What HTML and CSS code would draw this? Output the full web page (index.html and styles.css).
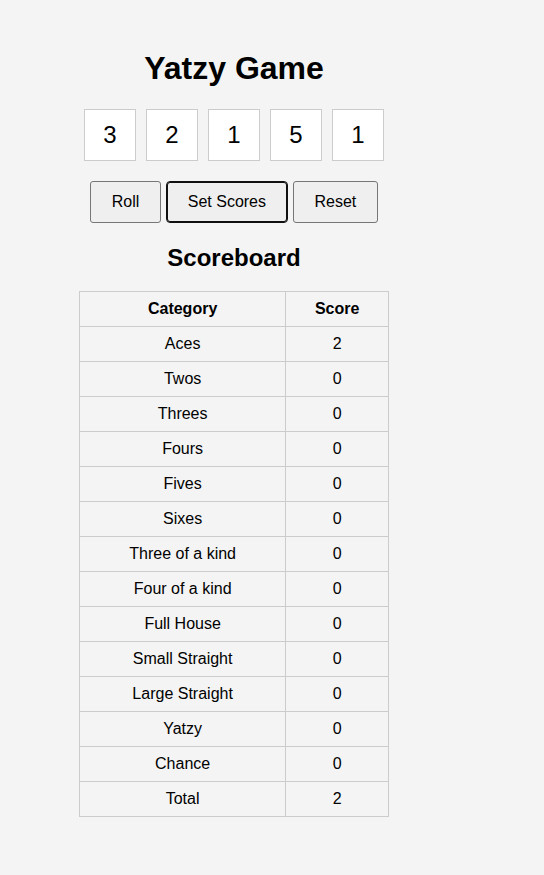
FILE: index.html
```html
<!DOCTYPE html>
<html lang="en">
<head>
<meta charset="utf-8">
<title>Yatzy Game</title>
<link rel="stylesheet" href="styles.css">
</head>
<body>
<div class="game">
  <h1 class="title">Yatzy Game</h1>
  <div class="dice">
    <div class="die">3</div>
    <div class="die">2</div>
    <div class="die">1</div>
    <div class="die">5</div>
    <div class="die">1</div>
  </div>
  <div class="controls">
    <button class="btn">Roll</button>
    <button class="btn btn-focus">Set Scores</button>
    <button class="btn">Reset</button>
  </div>
  <h2 class="subtitle">Scoreboard</h2>
  <table class="scoreboard">
    <colgroup><col class="col-cat"><col class="col-score"></colgroup>
    <thead>
      <tr><th>Category</th><th>Score</th></tr>
    </thead>
    <tbody>
      <tr><td>Aces</td><td>2</td></tr>
      <tr><td>Twos</td><td>0</td></tr>
      <tr><td>Threes</td><td>0</td></tr>
      <tr><td>Fours</td><td>0</td></tr>
      <tr><td>Fives</td><td>0</td></tr>
      <tr><td>Sixes</td><td>0</td></tr>
      <tr><td>Three of a kind</td><td>0</td></tr>
      <tr><td>Four of a kind</td><td>0</td></tr>
      <tr><td>Full House</td><td>0</td></tr>
      <tr><td>Small Straight</td><td>0</td></tr>
      <tr><td>Large Straight</td><td>0</td></tr>
      <tr><td>Yatzy</td><td>0</td></tr>
      <tr><td>Chance</td><td>0</td></tr>
      <tr><td>Total</td><td>2</td></tr>
    </tbody>
  </table>
</div>
</body>
</html>
```

FILE: styles.css
```css
html, body {
  margin: 0;
  padding: 0;
  background: #f4f4f4;
}

body {
  font-family: "Liberation Sans", Arial, sans-serif;
  font-size: 16px;
  color: #000;
}

.game {
  width: 452px;
  margin-left: 8px;
  padding-top: 30px;
  display: flex;
  flex-direction: column;
  align-items: center;
}

.title {
  font-size: 32px;
  font-weight: bold;
  line-height: 36px;
  margin: 20px 0 23px;
}

.dice {
  display: flex;
  gap: 10px;
}

.die {
  width: 50px;
  height: 50px;
  border: 1px solid #cccccc;
  background: #ffffff;
  font-size: 24px;
  display: flex;
  align-items: center;
  justify-content: center;
}

.controls {
  display: flex;
  gap: 4.5px;
  margin-top: 20px;
}

.btn {
  font-family: "Liberation Sans", Arial, sans-serif;
  font-size: 16px;
  color: #000;
  background: #efefef;
  border: 1px solid #767676;
  border-radius: 3px;
  height: 42px;
  padding: 0 21px;
  line-height: 18px;
}

.btn-focus {
  border-color: #101010;
  box-shadow: inset 0 0 0 1px #101010;
  border-radius: 4px;
}

.subtitle {
  font-size: 24px;
  font-weight: bold;
  line-height: 27px;
  margin: 21px 0 20px;
}

.scoreboard {
  border-collapse: collapse;
  width: 310px;
}

.col-cat { width: 207px; }
.col-score { width: 103px; }

.scoreboard th,
.scoreboard td {
  border: 1px solid #cccccc;
  padding: 8px;
  line-height: 18px;
  text-align: center;
  font-size: 16px;
}

.scoreboard th {
  font-weight: bold;
}
```
